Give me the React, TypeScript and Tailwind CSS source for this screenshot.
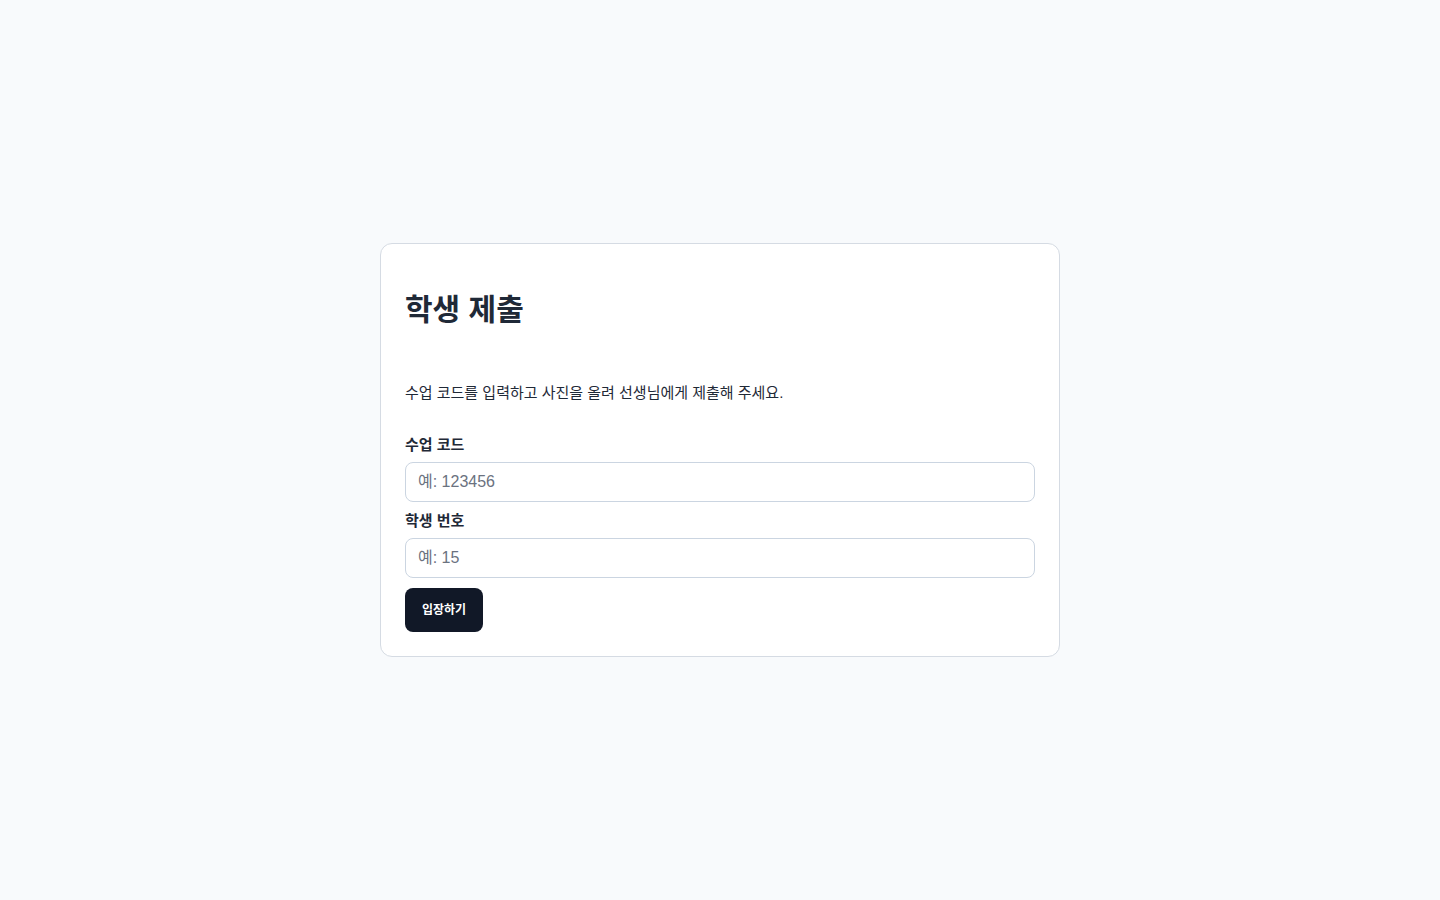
export default function App() {
  return (
    <div className="flex min-h-screen items-center justify-center bg-[#f8fafc] font-['Liberation_Sans','Noto_Sans_CJK_KR',sans-serif]">
      <div className="w-[680px] rounded-xl border border-[#d5dbe3] bg-white p-6">
        <h1 className="mt-6 text-[30px] font-bold leading-9 text-[#1f2937]">
          학생 제출
        </h1>

        <p className="mt-[55px] text-[15px] leading-5 text-[#1f2937]">
          수업 코드를 입력하고 사진을 올려 선생님에게 제출해 주세요.
        </p>

        <form className="mt-8 flex flex-col" onSubmit={(e) => e.preventDefault()}>
          <Field label="수업 코드" placeholder="예: 123456" />
          <div className="h-[9px]" />
          <Field label="학생 번호" placeholder="예: 15" />

          <button
            type="submit"
            className="mt-[10px] h-11 w-[78px] rounded-lg bg-[#111827] text-xs font-bold text-white"
          >
            입장하기
          </button>
        </form>
      </div>
    </div>
  );
}

function Field({ label, placeholder }: { label: string; placeholder: string }) {
  return (
    <label className="flex flex-col">
      <span className="text-[15px] font-semibold leading-5 text-[#1f2937]">{label}</span>
      <input
        placeholder={placeholder}
        className="mt-[7px] h-10 rounded-lg border border-[#cbd5e1] px-3 text-base text-[#1f2937] outline-none placeholder:text-[#6b7280]"
      />
    </label>
  );
}
